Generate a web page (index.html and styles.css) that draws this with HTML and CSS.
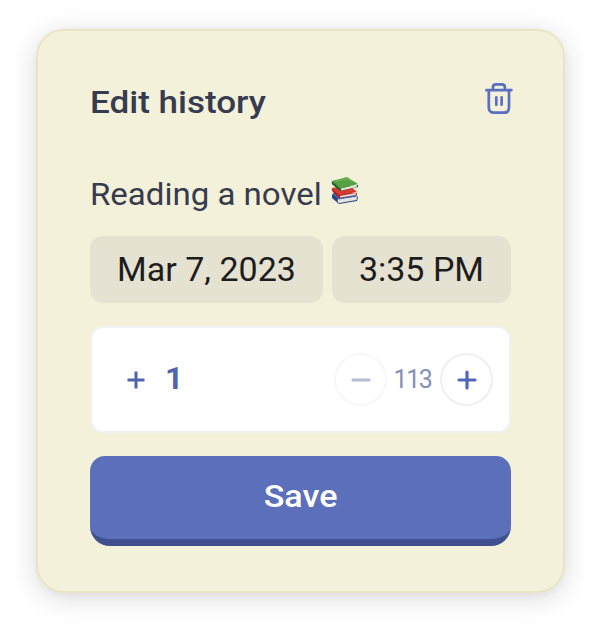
FILE: index.html
```html
<!DOCTYPE html>
<html lang="en">
<head>
<meta charset="utf-8">
<title>Edit history</title>
<link rel="stylesheet" href="styles.css">
</head>
<body>
<main class="card">
  <header class="header">
    <h1 class="title">Edit history</h1>
    <button class="delete" aria-label="Delete">
      <svg width="30" height="34" viewBox="0 0 30 34" fill="none" stroke="#5b6fc0" stroke-width="2.7" stroke-linecap="round" stroke-linejoin="round"><path d="M2.4 8.2H27.4M8.9 8V5.4Q8.9 2.4 12 2.4H17.8Q20.9 2.4 20.9 5.4V8M4.8 8.8V25.5Q4.8 30.7 10 30.7H19.8Q25 30.7 25 25.5V8.8M12.3 15.3V22.7M17.6 15.3V22.7"/></svg>
    </button>
  </header>
  <div class="activity">
    <span class="name">Reading a novel</span>
    <svg class="books" width="28" height="28" viewBox="0 0 28 28">
      <path fill="#27467f" d="M1 19L3 17L20 17L27 21L26 25L8 28L1 22Z"/>
      <path fill="#e5e4e1" d="M7 23L26 20.5L25.5 24L8 27Q6 26 7 23Z"/>
      <path fill="#4166ad" d="M1 18L7 16L27 20L8 23.5Z"/>
      <path fill="#a82024" d="M1 12Q0 14 2 16L8 22L26 19V17L8 18Z"/>
      <path fill="#eee8df" d="M9 20L25 17L24.5 19L9 21.5Z"/>
      <path fill="#d83a32" d="M1 12L18 9L26 16L8 19.5Z"/>
      <path fill="#285f2d" d="M1 5Q0 8 2 9L9 15L27 11V9L9 11Z"/>
      <path fill="#eeeade" d="M10 12.5L26 8.5L25.5 11L10 14.5Z"/>
      <path fill="#55a244" d="M1 5L16 1L27 8L9 12.5Z"/>
      <path fill="none" stroke="#76b658" stroke-width="1" d="M5 5L16 2.6L22 6"/>
    </svg>
  </div>
  <div class="when">
    <button class="pill date"><span>Mar 7, 2023</span></button>
    <button class="pill time"><span>3:35 PM</span></button>
  </div>
  <section class="counter">
    <svg class="sign" width="18" height="18" viewBox="0 0 18 18" stroke="#5065ae" stroke-width="3"><path d="M.5 9H17.5M9 .5V17.5"/></svg>
    <span class="amount">1</span>
    <button class="round muted" aria-label="Decrease"><svg width="22" height="22" viewBox="0 0 22 22" stroke="#b6bdd6" stroke-width="3.2" stroke-linecap="round"><path d="M3 11H19"/></svg></button>
    <span class="total">113</span>
    <button class="round" aria-label="Increase"><svg width="22" height="22" viewBox="0 0 22 22" stroke="#5267b8" stroke-width="3.2" stroke-linecap="round"><path d="M3 11H19M11 3V19"/></svg></button>
  </section>
  <button class="save"><span class="save-label">Save</span></button>
</main>
</body>
</html>
```
FILE: styles.css
```css
* { box-sizing: border-box; }
body {
  margin: 0;
  padding: 29px 35px 42px 36px;
  background: #fff;
  font-family: Roboto, sans-serif;
  color: #363b4d;
}
button { margin: 0; padding: 0; border: 0; background: none; font: inherit; color: inherit; }
svg { display: block; flex: none; }
.card {
  height: 564px;
  padding: 50px 52px 0;
  border: 2px solid #e9e5c4;
  border-radius: 28px;
  background: #f4f1db;
  box-shadow: 0 5px 26px rgba(35, 35, 50, .17), 0 2px 8px rgba(35, 35, 50, .03);
}
.header { display: flex; justify-content: space-between; align-items: flex-start; height: 94px; }
.title { margin: 2px 0 0; font-size: 31px; line-height: 40px; font-weight: 500; transform: scaleX(1.13); transform-origin: left; white-space: nowrap; }
.delete { margin: 1px -3px 0 0; }
.activity { display: flex; align-items: flex-start; height: 61px; }
.name { width: 241px; font-size: 31px; line-height: 40px; transform: scaleX(1.065); transform-origin: left; white-space: nowrap; }
.books { margin-top: 1px; }
.when { display: flex; gap: 9px; }
.pill { height: 67px; border-radius: 13px; background: #e5e2d1; color: #1d1d1d; font-size: 34px; line-height: 67px; white-space: nowrap; }
.date { width: 233px; }
.time { width: 179px; }
.counter {
  display: flex;
  align-items: center;
  height: 107px;
  margin-top: 23px;
  padding: 0 16px 0 35px;
  border: 2px solid #f1f1f1;
  border-radius: 13px;
  background: #fff;
}
.amount { flex: 1; margin-left: 20px; padding-bottom: 3px; color: #5065ae; font-size: 32px; font-weight: 700; line-height: 40px; }
.round { display: flex; align-items: center; justify-content: center; width: 53px; height: 53px; border: 2px solid #efefef; border-radius: 50%; flex: none; }
.muted { border-color: #f7f7f7; }
.total { flex: none; width: 53px; padding-right: 2px; text-align: center; color: #858fb6; font-size: 25px; letter-spacing: -1.4px; }
.save { display: block; width: 421px; height: 90px; margin-top: 23px; padding-bottom: 3px; border-bottom: 7px solid #40508e; border-radius: 15px 15px 20px 20px; background: #5b6fbb; color: #fff; font-size: 31px; font-weight: 500; }
.save-label { display: inline-block; transform: scaleX(1.1); }
```
